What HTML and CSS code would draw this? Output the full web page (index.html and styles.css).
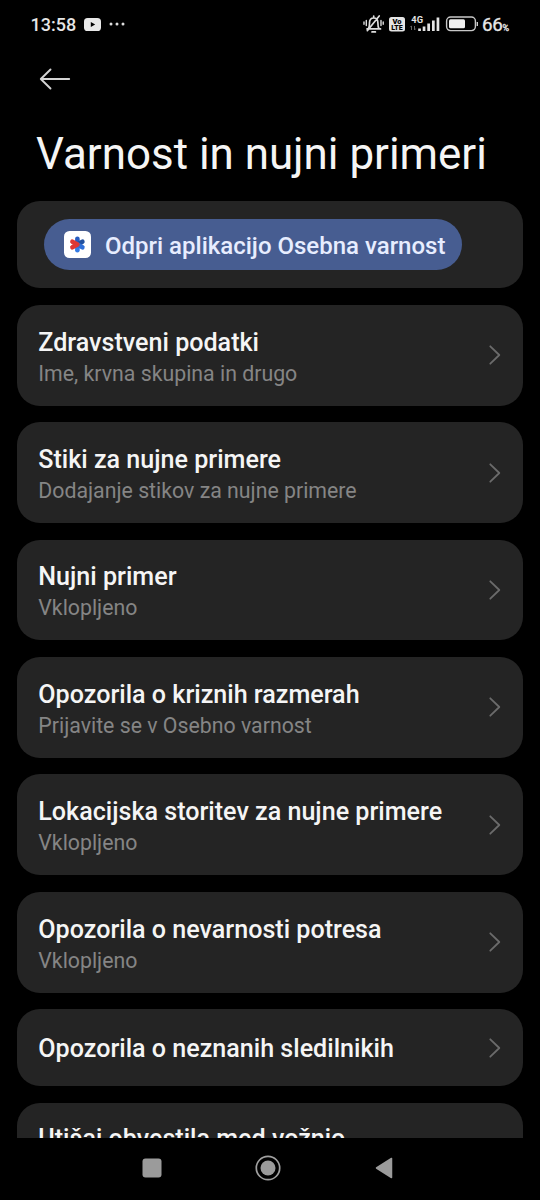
FILE: index.html
```html
<!DOCTYPE html>
<html lang="sl">
<head>
<meta charset="utf-8">
<title>Varnost in nujni primeri</title>
<link rel="stylesheet" href="styles.css">
</head>
<body>
<div class="screen">
  <header class="status">
    <span class="clock">13:58</span>
    <svg class="video" width="17" height="13" viewBox="0 0 17 13"><rect width="17" height="13" rx="3.6" fill="#e8e8e8"/><path d="M6.8 4v5l4.4-2.5z" fill="#000"/></svg>
    <svg class="dots" width="16" height="4" viewBox="0 0 16 4" fill="#ddd"><circle cx="2" cy="2" r="1.500"/><circle cx="8" cy="2" r="1.500"/><circle cx="14" cy="2" r="1.500"/></svg>
    <svg class="indicators" width="116" height="20" viewBox="362 14 116 20">
      <g fill="none" stroke="#dedede" stroke-width="1.700" stroke-linecap="round" stroke-linejoin="round">
        <path d="M367 28.900h13.500M368.500 28.400c1-1.500 1-3 1-5.400 0-3 1.700-5 4.200-5s4.200 2 4.200 5c0 2.400 0 3.900 1 5.400M373.700 16v1.600M372 31.900h3.400M367.300 30.700l11.900-14.700"/>
        <path d="M366.300 20.500v5M364 22v2.200M381 20.500v5M383.200 22v2.200" stroke-width="1.400"/>
      </g>
      <rect x="389" y="17" width="16" height="14.500" rx="2.500" fill="#e4e4e4"/>
      <g font-family="Roboto, sans-serif" font-weight="900">
        <text x="397" y="23.700" font-size="7.500" text-anchor="middle" fill="#000">Vo</text>
        <text x="397" y="30.200" font-size="7" text-anchor="middle" fill="#000">LTE</text>
        <text x="411.300" y="22.700" font-size="9.300" font-weight="700" fill="#e4e4e4">4G</text>
      </g>
      <path d="M411.500 30v-4M410.300 27.200l1.200-1.400M414.500 26v4M415.700 28.600l-1.200 1.400" stroke="#666" fill="none"/>
      <path d="M418.200 28.500h2.700V31h-2.700zM422.700 26.500h2.700V31h-2.700zM427.300 23.500h2.700V31h-2.700zM432 20.500h2.700V31H432zM436.600 17.500h2.700V31h-2.700z" fill="#e4e4e4"/>
      <rect x="446.600" y="17" width="28.800" height="13.600" rx="4" fill="none" stroke="#c8c8c8" stroke-width="1.400"/>
      <rect x="449" y="19.300" width="16" height="9" rx="1.500" fill="#eee"/>
      <path d="M477.300 22v4" stroke="#d0d0d0" stroke-width="1.400"/>
    </svg>
    <span class="percent">66<small>%</small></span>
  </header>
  <nav class="toolbar">
    <svg width="32" height="24" viewBox="0 0 32 24" fill="none" stroke="#d4d4d4" stroke-width="1.900" stroke-linecap="round" stroke-linejoin="round"><path d="M30.200 12H1.800M11.500 2.500L1.800 12l9.700 9.500"/></svg>
  </nav>
  <h1 class="title">Varnost in nujni primeri</h1>
  <main class="list">
    <section class="card launch">
      <a class="pill">
        <svg width="27" height="27" viewBox="0 0 27 27">
          <rect width="27" height="27" rx="5.500" fill="#fff"/>
          <g stroke-width="4.600" stroke-linecap="round">
            <path d="M13.400 13.500V7.700" stroke="#285cc0"/><path d="M13.400 13.500v5.800" stroke="#347be4"/>
            <path d="M13.400 13.500l5-2.800" stroke="#21509f"/><path d="M13.400 13.500l5 2.800" stroke="#2f6fd8"/>
            <path d="M8.400 10.700l5 2.800-5 2.800" stroke="#de3834" fill="none" stroke-linejoin="round"/>
          </g>
        </svg>
        <span>Odpri aplikacijo Osebna varnost</span>
      </a>
    </section>
    <section class="card"><div><h2>Zdravstveni podatki</h2><p>Ime, krvna skupina in drugo</p></div><svg class="chevron" viewBox="0 0 12 20"><path d="M1.300 1.300L10.300 10l-9 8.700"/></svg></section>
    <section class="card"><div><h2>Stiki za nujne primere</h2><p>Dodajanje stikov za nujne primere</p></div><svg class="chevron" viewBox="0 0 12 20"><path d="M1.300 1.300L10.300 10l-9 8.700"/></svg></section>
    <section class="card"><div><h2>Nujni primer</h2><p>Vklopljeno</p></div><svg class="chevron" viewBox="0 0 12 20"><path d="M1.300 1.300L10.300 10l-9 8.700"/></svg></section>
    <section class="card"><div><h2>Opozorila o kriznih razmerah</h2><p>Prijavite se v Osebno varnost</p></div><svg class="chevron" viewBox="0 0 12 20"><path d="M1.300 1.300L10.300 10l-9 8.700"/></svg></section>
    <section class="card"><div><h2>Lokacijska storitev za nujne primere</h2><p>Vklopljeno</p></div><svg class="chevron" viewBox="0 0 12 20"><path d="M1.300 1.300L10.300 10l-9 8.700"/></svg></section>
    <section class="card"><div><h2>Opozorila o nevarnosti potresa</h2><p>Vklopljeno</p></div><svg class="chevron" viewBox="0 0 12 20"><path d="M1.300 1.300L10.300 10l-9 8.700"/></svg></section>
    <section class="card single"><div><h2>Opozorila o neznanih sledilnikih</h2></div><svg class="chevron" viewBox="0 0 12 20"><path d="M1.300 1.300L10.300 10l-9 8.700"/></svg></section>
    <section class="card single last"><div><h2>Utišaj obvestila med vožnjo</h2></div></section>
  </main>
  <footer class="navbar">
    <svg width="20" height="20" viewBox="0 0 20 20"><rect x=".5" y=".5" width="19" height="19" rx="3" fill="#9b9b9b"/></svg>
    <svg width="26" height="26" viewBox="0 0 26 26"><circle cx="13" cy="13" r="11.700" fill="none" stroke="#a0a0a0" stroke-width="1.700"/><circle cx="13" cy="13" r="7.500" fill="#9b9b9b"/></svg>
    <svg width="18" height="22" viewBox="0 0 18 22"><path d="M16.500 1.500v19L1.500 11z" fill="#9b9b9b" stroke="#9b9b9b" stroke-width="1.500" stroke-linejoin="round"/></svg>
  </footer>
</div>
</body>
</html>
```
FILE: styles.css
```css
* { box-sizing: border-box; }
body { margin: 0; background: #000; font-family: Roboto, sans-serif; }
h1, h2, p { margin: 0; white-space: nowrap; }
svg { display: block; flex: none; }
.screen { width: 540px; height: 1200px; display: flex; flex-direction: column; overflow: hidden; color: #f5f5f5; }
.status { height: 48px; flex: none; display: flex; align-items: center; padding: 0 30px; color: #e6e6e6; }
.clock { font-size: 18px; font-weight: 500; width: 54px; padding: 1px 0 0 0.5px; }
.dots { margin-left: 8px; }
.indicators { margin-left: auto; }
.percent { width: 28px; margin-left: 4px; font-size: 18.8px; font-weight: 400; -webkit-text-stroke: 0.3px #e6e6e6; letter-spacing: -0.3px; white-space: nowrap; padding-top: 1px; }
.percent small { font-size: 9px; }
.toolbar { height: 62px; flex: none; display: flex; align-items: center; padding-left: 39px; }
.title { height: 90.6px; flex: none; padding-left: 36px; font-size: 43.9px; font-weight: 400; line-height: 88px; }
.list { flex: 1; min-height: 0; overflow: hidden; display: flex; flex-direction: column; gap: 16.6px; padding: 0 17px; }
.card { height: 100.8px; flex: none; border-radius: 23px; background: #242424; display: flex; align-items: center; justify-content: space-between; padding: 0 22px 0 21.3px; }
.card > div { padding-top: 5px; }
.card h2 { font-size: 25.1px; font-weight: 500; line-height: 31px; }
.card p { font-size: 21.3px; line-height: 31px; color: #858585; }
.card.single { height: 76.8px; }
.card.single > div { padding-top: 1.6px; }
.card.last > div { padding: 0 0 4px; }
.card.launch { height: 87.6px; padding: 0 27px; }
.pill { width: 418px; height: 51px; border-radius: 26px; background: #475d91; display: flex; align-items: center; gap: 14px; padding-left: 20px; color: #e7edff; font-size: 24px; font-weight: 500; white-space: nowrap; }
.pill span { padding-top: 2.5px; }
.chevron { width: 12px; height: 20px; fill: none; stroke: #6b6b6b; stroke-width: 1.8; stroke-linecap: round; stroke-linejoin: round; }
.navbar { height: 62px; flex: none; display: flex; align-items: center; padding-left: 142px; padding-bottom: 3px; gap: 93px; }
.navbar svg:last-child { margin-left: 1px; }
```
